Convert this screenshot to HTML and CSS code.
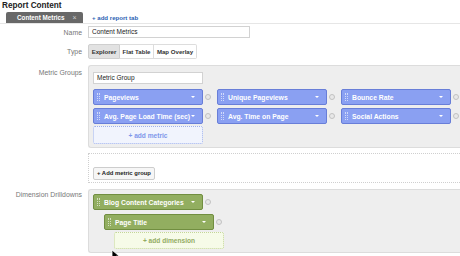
FILE: index.html
```html
<!DOCTYPE html>
<html>
<head>
<meta charset="utf-8">
<link rel="stylesheet" href="styles.css">
</head>
<body>
<div class="page">
  <h1 class="title">Report Content</h1>
  <div class="tabbar">
    <div class="tab"><span class="tab-name">Content Metrics</span><span class="tab-x">×</span></div>
    <span class="addtab">+ add report tab</span>
  </div>

  <div class="row row-name">
    <div class="label">Name</div>
    <div class="field"><div class="input name-input">Content Metrics</div></div>
  </div>

  <div class="row row-type">
    <div class="label">Type</div>
    <div class="field">
      <div class="seg">
        <span class="seg-btn active w-explorer">Explorer</span>
        <span class="seg-btn w-flat">Flat Table</span>
        <span class="seg-btn w-map">Map Overlay</span>
      </div>
    </div>
  </div>

  <div class="row row-metric">
    <div class="label label-metric">Metric Groups</div>
    <div class="field">
      <div class="panel metric-panel">
        <div class="input group-input">Metric Group</div>
        <div class="chip-grid">
          <div class="cell"><div class="chip blue"><i class="grip"></i><span class="chip-text">Pageviews</span><i class="caret"></i></div><i class="dot"></i></div>
          <div class="cell"><div class="chip blue"><i class="grip"></i><span class="chip-text">Unique Pageviews</span><i class="caret"></i></div><i class="dot"></i></div>
          <div class="cell"><div class="chip blue"><i class="grip"></i><span class="chip-text">Bounce Rate</span><i class="caret"></i></div><i class="dot"></i></div>
          <div class="cell"><div class="chip blue"><i class="grip"></i><span class="chip-text">Avg. Page Load Time (sec)</span><i class="caret"></i></div><i class="dot"></i></div>
          <div class="cell"><div class="chip blue"><i class="grip"></i><span class="chip-text">Avg. Time on Page</span><i class="caret"></i></div><i class="dot"></i></div>
          <div class="cell"><div class="chip blue"><i class="grip"></i><span class="chip-text">Social Actions</span><i class="caret"></i></div><i class="dot"></i></div>
        </div>
        <div class="add-slot add-metric">+ add metric</div>
      </div>
    </div>
  </div>

  <div class="row row-addgroup">
    <div class="label"></div>
    <div class="field">
      <div class="addgroup-box">
        <span class="addgroup-btn">+ Add metric group</span>
      </div>
    </div>
  </div>

  <div class="row row-dim">
    <div class="label label-dim">Dimension Drilldowns</div>
    <div class="field">
      <div class="panel dim-panel">
        <div class="cell dim-l0"><div class="chip green"><i class="grip"></i><span class="chip-text">Blog Content Categories</span><i class="caret"></i></div><i class="dot"></i></div>
        <div class="cell dim-l1"><div class="chip green"><i class="grip"></i><span class="chip-text">Page Title</span><i class="caret"></i></div><i class="dot"></i></div>
        <div class="add-slot add-dim dim-l2">+ add dimension</div>
      </div>
    </div>
  </div>

  <svg class="cursor" width="10" height="12" viewBox="0 0 10 12"><path d="M1 1 L1 10 L3.5 7.8 L5.3 11.5 L6.8 10.8 L5.1 7.2 L8.3 7.2 Z" fill="#000" stroke="#fff" stroke-width="0.8"/></svg>
</div>
</body>
</html>
```
FILE: styles.css
```css
* { box-sizing: border-box; }
html, body { margin: 0; padding: 0; background: #fff; }
body { width: 460px; height: 256px; overflow: hidden; font-family: "Liberation Sans", Arial, sans-serif; color: #333; }
.page { position: relative; width: 460px; height: 256px; }

.title { margin: 0; padding-left: 2px; font-size: 8.2px; line-height: 12px; font-weight: bold; color: #222; }

.tabbar { display: flex; align-items: flex-end; height: 12px; border-bottom: 1px solid #e6e6e6; }
.tab { display: flex; align-items: center; margin-left: 6px; width: 77px; height: 11px; padding-left: 11px; background: #686868; border-radius: 2px 2px 0 0; color: #fff; font-weight: bold; font-size: 6.3px; }
.tab-name { flex: 0 0 auto; }
.tab-x { margin-left: 8px; color: #ccc; font-weight: normal; font-size: 7px; }
.addtab { margin-left: 9px; align-self: center; color: #2b5fb3; font-weight: bold; font-size: 6.1px; line-height: 11px; }

.row { display: flex; }
.label { flex: 0 0 88px; width: 88px; padding-right: 6px; text-align: right; color: #777; font-size: 6.9px; }
.field { flex: 1; }

.row-name { margin-top: 2px; align-items: center; }
.input { height: 12px; border: 1px solid #d2d2d2; background: #fff; font-size: 6.5px; line-height: 10px; padding-left: 3px; color: #222; }
.name-input { width: 162px; }

.row-type { margin-top: 6px; align-items: center; }
.seg { display: flex; height: 15px; }
.seg-btn { display: flex; align-items: center; justify-content: center; height: 15px; border: 1px solid #ddd; border-left: none; background: #fff; font-weight: bold; font-size: 6.1px; color: #333; }
.seg-btn:first-child { border-left: 1px solid #ddd; border-radius: 2px 0 0 2px; }
.seg-btn:last-child { border-radius: 0 2px 2px 0; }
.seg-btn.active { background: #e2e2e2; border-color: #cfcfcf; }
.w-explorer { width: 32px; }
.w-flat { width: 34px; }
.w-map { width: 43px; }

.row-metric { margin-top: 6px; }
.label-metric { padding-top: 3px; line-height: 10px; }
.panel { background: #eeeeee; border: 1px solid #dcdcdc; border-right: none; border-radius: 3px 0 0 3px; }
.metric-panel { height: 83px; padding: 6px 0 0 4px; }
.group-input { width: 110px; }

.chip-grid { display: flex; flex-wrap: wrap; width: 372px; row-gap: 3px; margin-top: 5px; }
.cell { display: flex; align-items: center; width: 124px; }
.chip { position: relative; display: flex; align-items: center; width: 110px; height: 16px; border-radius: 2px; color: #fff; font-weight: bold; font-size: 6.8px; padding-left: 10px; }
.chip.blue { background: #8aa0f2; border: 1px solid #687ed8; }
.chip.green { background: #92ae60; border: 1px solid #718e40; }
.grip { position: absolute; left: 3px; top: 3px; width: 3px; height: 8px; border-left: 1px dotted rgba(255,255,255,0.6); border-right: 1px dotted rgba(255,255,255,0.6); }
.chip-text { white-space: nowrap; }
.caret { position: absolute; right: 7px; top: 6px; width: 0; height: 0; border-left: 2px solid transparent; border-right: 2px solid transparent; border-top: 2.5px solid #fff; }
.dot { width: 6px; height: 6px; margin-left: 2px; border-radius: 50%; border: 1px solid #c2c2c2; background: #e8e8e8; }

.add-slot { display: flex; align-items: center; justify-content: center; width: 110px; font-weight: bold; font-size: 6.6px; border-radius: 2px; }
.add-metric { height: 18px; margin-top: 2px; background: #f1f4fd; border: 1px dotted #9fb1ec; color: #8098ea; }

.row-addgroup { margin-top: 5px; }
.addgroup-box { height: 30px; border: 1px dotted #cfcfcf; border-right: none; padding: 7px 0 0 4px; }
.addgroup-btn { display: inline-flex; align-items: center; justify-content: center; width: 62px; height: 13px; background: #f6f6f6; border: 1px solid #cdcdcd; border-radius: 2px; font-weight: bold; font-size: 5.9px; color: #222; }

.row-dim { margin-top: 6px; }
.label-dim { padding-top: 1px; line-height: 10px; }
.dim-panel { height: 64px; padding: 4px 0 0 4px; }
.dim-l1 { margin-left: 11px; margin-top: 4px; }
.dim-l2 { margin-left: 21px; margin-top: 2px; }
.add-dim { height: 17px; background: #f6fbe8; border: 1px dotted #c3d598; color: #93ac63; }

.cursor { position: absolute; left: 111px; top: 249px; }
```
